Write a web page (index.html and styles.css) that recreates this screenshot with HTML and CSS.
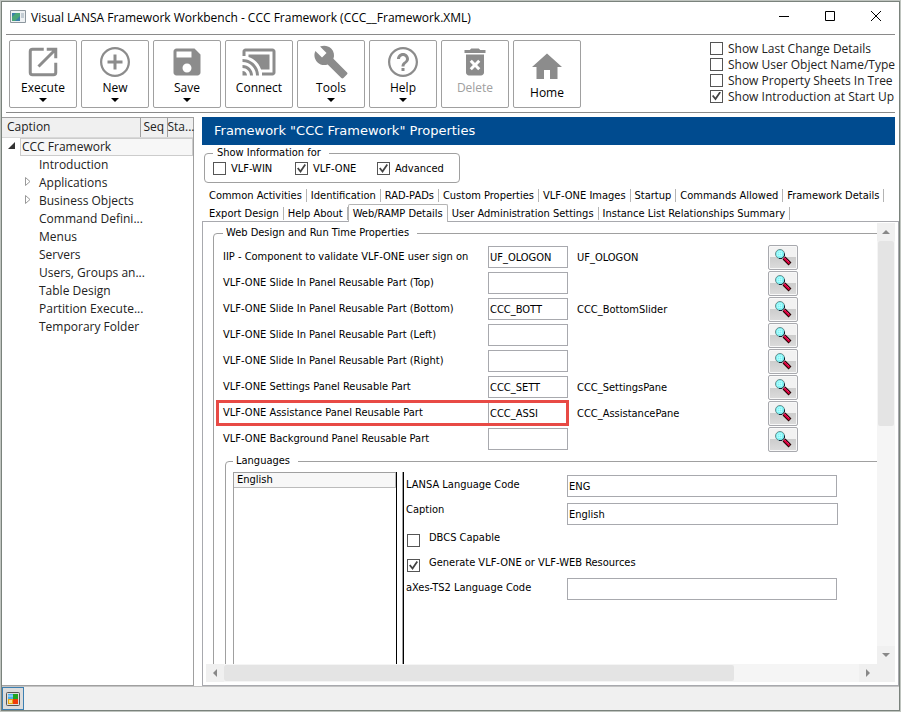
FILE: index.html
```html
<!DOCTYPE html>
<html lang="en">
<head>
  <meta charset="UTF-8" />
  <meta name="viewport" content="width=device-width, initial-scale=1.0"/>
  <title>Visual LANSA Framework Workbench</title>
  <link rel="stylesheet" href="styles.css">
</head>
<body>

<svg class="defs">
  <symbol id="search" viewBox="0 0 18 18">
    <path d="M10 10l6 6" stroke="#200" stroke-width="4"/>
    <path d="M10 10l5.500 5.500" stroke="#e0003c" stroke-width="2"/>
    <path d="M11.500 10.500l4 4" stroke="#f040a0" stroke-width="1" stroke-dasharray="1 1"/>
    <circle cx="6" cy="6" r="4.500" fill="#7ff4f6" stroke="#6d8c8c"/>
    <path d="M3 5h6M3 7h6M5 3v6M7 3v6" stroke="#c8ffff" stroke-dasharray="1 1"/>
    <path d="M10.500 5.500v2.500l-2.500 2.500h-3" fill="none" stroke="#123"/>
  </symbol>
</svg>

<div class="window">
  <header class="titlebar">
    <svg class="app-icon" width="16" height="14" viewBox="0 0 16 14">
      <path d="M.5.5h15v12H.5z" fill="#eef1f3" stroke="#8d979e"/>
      <path d="M2 3h8v8H2z" fill="#3a7fa8"/>
      <path d="M2 7l4-4h4v3L5 11H2z" fill="#4aa678"/>
      <path d="M11 3h3v5h-3z" fill="#c4cdd4"/>
    </svg>
    <h1>Visual LANSA Framework Workbench - CCC Framework (CCC__Framework.XML)</h1>
    <div class="window-buttons">
      <button aria-label="Minimize"><svg width="12" height="12"><path d="M1 6.500h10" stroke="#000"/></svg></button>
      <button aria-label="Maximize"><svg width="12" height="12"><path d="M1.500 1.500h9v9h-9z" fill="none" stroke="#000"/></svg></button>
      <button aria-label="Close"><svg width="12" height="12"><path d="M1 1l10 10M11 1L1 11" stroke="#000"/></svg></button>
    </div>
  </header>

  <div class="toolbar">
    <div class="tools">
      <button class="tool">
        <svg viewBox="0 0 24 24"><path d="M13 4H5.500Q4 4 4 5.500v14Q4 21 5.500 21h14q1.500 0 1.500-1.500V13M15 4H21v6M21 4L9.500 15.500" transform="translate(-.5 -.5)" fill="none" stroke="#8c8c8c" stroke-width="2"/></svg>
        <span>Execute</span><i class="arrow"></i>
      </button>
      <button class="tool">
        <svg viewBox="0 0 24 24"><path d="M13 7h-2v4H7v2h4v4h2v-4h4v-2h-4V7zm-1-5C6.480 2 2 6.480 2 12s4.480 10 10 10 10-4.480 10-10S17.520 2 12 2zm0 18.500c-4.700 0-8.500-3.800-8.500-8.500S7.300 3.500 12 3.500s8.500 3.800 8.500 8.500-3.800 8.500-8.500 8.500z"/></svg>
        <span>New</span><i class="arrow"></i>
      </button>
      <button class="tool">
        <svg viewBox="0 0 24 24"><path d="M17 3H5c-1.110 0-2 .9-2 2v14c0 1.100.89 2 2 2h14c1.100 0 2-.9 2-2V7l-4-4zm-5 16c-1.660 0-3-1.340-3-3s1.340-3 3-3 3 1.340 3 3-1.340 3-3 3zm3-10H5V5h10v4z"/></svg>
        <span>Save</span><i class="arrow"></i>
      </button>
      <button class="tool">
        <svg viewBox="0 0 24 24"><path d="M1 18v3h3c0-1.660-1.340-3-3-3zm0-4v2c2.760 0 5 2.240 5 5h2c0-3.870-3.130-7-7-7zm18-7H5v1.630c3.960 1.280 7.090 4.410 8.370 8.370H19V7zM1 10v2c4.970 0 9 4.030 9 9h2c0-6.080-4.930-11-11-11zm20-7H3c-1.100 0-2 .9-2 2v3h2V5h18v14h-7v2h7c1.100 0 2-.9 2-2V5c0-1.100-.9-2-2-2z"/></svg>
        <span>Connect</span>
      </button>
      <button class="tool">
        <svg viewBox="0 0 24 24"><path d="M22.700 19l-9.100-9.100c.9-2.300.4-5-1.500-6.900-2-2-5-2.400-7.400-1.300L9 6 6 9 1.600 4.700C.4 7.100.9 10.100 2.900 12.100c1.900 1.900 4.600 2.400 6.900 1.500l9.100 9.100c.4.4 1 .4 1.400 0l2.300-2.300c.5-.4.5-1.100.1-1.400z"/></svg>
        <span>Tools</span><i class="arrow"></i>
      </button>
      <button class="tool">
        <svg viewBox="0 0 24 24"><path d="M11 18h2v-2h-2v2zm1-16C6.480 2 2 6.480 2 12s4.480 10 10 10 10-4.480 10-10S17.520 2 12 2zm0 18.500c-4.700 0-8.500-3.800-8.500-8.500S7.300 3.500 12 3.500s8.500 3.800 8.500 8.500-3.800 8.500-8.500 8.500zM12 6c-2.210 0-4 1.790-4 4h2c0-1.100.9-2 2-2s2 .9 2 2c0 2-3 1.750-3 5h2c0-2.250 3-2.500 3-5 0-2.210-1.790-4-4-4z"/></svg>
        <span>Help</span><i class="arrow"></i>
      </button>
      <button class="tool" disabled>
        <svg viewBox="0 0 24 24"><path d="M6 19c0 1.100.9 2 2 2h8c1.100 0 2-.9 2-2V7H6v12zm2.460-7.120l1.410-1.410L12 12.590l2.120-2.120 1.410 1.410L13.410 14l2.120 2.120-1.410 1.410L12 15.410l-2.120 2.120-1.410-1.410L10.590 14l-2.130-2.120zM15.500 4l-1-1h-5l-1 1H5v2h14V4z"/></svg>
        <span>Delete</span>
      </button>
      <button class="tool home">
        <svg viewBox="0 0 24 24"><path d="M10 20v-6h4v6h5v-8h3L12 3 2 12h3v8z"/></svg>
        <span>Home</span>
      </button>
    </div>
    <div class="options">
      <label><input type="checkbox">Show Last Change Details</label>
      <label><input type="checkbox">Show User Object Name/Type</label>
      <label><input type="checkbox">Show Property Sheets In Tree</label>
      <label><input type="checkbox" checked>Show Introduction at Start Up</label>
    </div>
  </div>

  <div class="main">
    <aside class="tree">
      <table>
        <thead>
          <tr><th>Caption</th><th class="seq">Seq</th><th class="sta">Sta...</th></tr>
        </thead>
        <tbody>
          <tr><td colspan="3" class="root"><div><svg width="18" height="10"><path d="M13 1v7H6z" fill="#333"/></svg><span>CCC Framework</span></div></td></tr>
          <tr><td colspan="3">Introduction</td></tr>
          <tr><td colspan="3"><svg class="twisty" width="6" height="9"><path d="M.5.5l4.500 4-4.500 4z" fill="#fff" stroke="#999"/></svg>Applications</td></tr>
          <tr><td colspan="3"><svg class="twisty" width="6" height="9"><path d="M.5.5l4.500 4-4.500 4z" fill="#fff" stroke="#999"/></svg>Business Objects</td></tr>
          <tr><td colspan="3">Command Defini...</td></tr>
          <tr><td colspan="3">Menus</td></tr>
          <tr><td colspan="3">Servers</td></tr>
          <tr><td colspan="3">Users, Groups an...</td></tr>
          <tr><td colspan="3">Table Design</td></tr>
          <tr><td colspan="3">Partition Execute...</td></tr>
          <tr><td colspan="3">Temporary Folder</td></tr>
        </tbody>
      </table>
    </aside>

    <section class="properties">
      <h2>Framework "CCC Framework" Properties</h2>
      <fieldset class="show-info">
        <legend>Show Information for</legend>
        <label><input type="checkbox">VLF-WIN</label>
        <label><input type="checkbox" checked>VLF-ONE</label>
        <label><input type="checkbox" checked>Advanced</label>
      </fieldset>

      <nav class="tabs">
        <div class="tab-row">
          <button>Common Activities</button><button>Identification</button><button>RAD-PADs</button><button>Custom Properties</button><button>VLF-ONE Images</button><button>Startup</button><button>Commands Allowed</button><button>Framework Details</button>
        </div>
        <div class="tab-row">
          <button>Export Design</button><button>Help About</button><button class="active">Web/RAMP Details</button><button>User Administration Settings</button><button>Instance List Relationships Summary</button>
        </div>
      </nav>

      <div class="panel">
        <div class="view">
          <fieldset class="group">
            <legend>Web Design and Run Time Properties</legend>
            <div class="part">
              <label for="iip">IIP - Component to validate VLF-ONE user sign on</label>
              <input id="iip" value="UF_OLOGON"><span>UF_OLOGON</span>
              <button aria-label="Find"><svg><use href="#search"/></svg></button>
            </div>
            <div class="part">
              <label for="top">VLF-ONE Slide In Panel Reusable Part (Top)</label>
              <input id="top"><span></span>
              <button aria-label="Find"><svg><use href="#search"/></svg></button>
            </div>
            <div class="part">
              <label for="bottom">VLF-ONE Slide In Panel Reusable Part (Bottom)</label>
              <input id="bottom" value="CCC_BOTT"><span>CCC_BottomSlider</span>
              <button aria-label="Find"><svg><use href="#search"/></svg></button>
            </div>
            <div class="part">
              <label for="left">VLF-ONE Slide In Panel Reusable Part (Left)</label>
              <input id="left"><span></span>
              <button aria-label="Find"><svg><use href="#search"/></svg></button>
            </div>
            <div class="part">
              <label for="right">VLF-ONE Slide In Panel Reusable Part (Right)</label>
              <input id="right"><span></span>
              <button aria-label="Find"><svg><use href="#search"/></svg></button>
            </div>
            <div class="part">
              <label for="settings">VLF-ONE Settings Panel Reusable Part</label>
              <input id="settings" value="CCC_SETT"><span>CCC_SettingsPane</span>
              <button aria-label="Find"><svg><use href="#search"/></svg></button>
            </div>
            <div class="part marked">
              <label for="assist">VLF-ONE Assistance Panel Reusable Part</label>
              <input id="assist" value="CCC_ASSI"><span>CCC_AssistancePane</span>
              <button aria-label="Find"><svg><use href="#search"/></svg></button>
            </div>
            <div class="part">
              <label for="background">VLF-ONE Background Panel Reusable Part</label>
              <input id="background"><span></span>
              <button aria-label="Find"><svg><use href="#search"/></svg></button>
            </div>

            <fieldset class="group languages">
              <legend>Languages</legend>
              <ul class="language-list"><li>English</li></ul>
              <div class="splitter"></div>
              <div class="language-form">
                <label for="code">LANSA Language Code</label><input id="code" value="ENG">
                <label for="caption">Caption</label><input id="caption" class="wide" value="English">
                <label class="check"><input type="checkbox">DBCS Capable</label>
                <label class="check"><input type="checkbox" checked>Generate VLF-ONE or VLF-WEB Resources</label>
                <label for="axes">aXes-TS2 Language Code</label><input id="axes">
              </div>
            </fieldset>
          </fieldset>
        </div>
        <div class="scroll-v">
          <button aria-label="Scroll up"><svg width="8" height="4"><path d="M4 0l4 4H0z"/></svg></button>
          <div class="thumb"></div>
          <button aria-label="Scroll down"><svg width="8" height="4"><path d="M4 4L0 0h8z"/></svg></button>
        </div>
        <div class="scroll-h">
          <button aria-label="Scroll left"><svg width="4" height="8"><path d="M0 4l4-4v8z"/></svg></button>
          <div class="thumb"></div>
          <button aria-label="Scroll right"><svg width="4" height="8"><path d="M4 4L0 0v8z"/></svg></button>
        </div>
        <div class="corner"></div>
      </div>
    </section>
  </div>

  <footer class="statusbar">
    <button aria-label="Framework">
      <svg width="14" height="14" viewBox="0 0 14 14">
        <rect x=".5" y=".5" width="13" height="13" rx="1" fill="#ddd" stroke="#555"/>
        <path d="M2 2h5v5H2z" fill="#4db0ee"/><path d="M7 2h5v5H7z" fill="#1fa31f"/>
        <path d="M2 7h5v5H2z" fill="#e8a810"/><path d="M7 7h5v5H7z" fill="#f03a08"/>
        <path d="M3 8h3v3H3z" fill="#fbe08a"/><path d="M2 4h5" stroke="#bfe4fb"/>
      </svg>
    </button>
  </footer>
</div>

</body>
</html>
```
FILE: styles.css
```css
* {
  box-sizing: border-box;
}
body {
  margin: 0;
  background: #bfc4bf;
  font-family: "Open Sans", "Noto Sans", sans-serif;
  font-size: 12px;
  color: #000;
}
button {
  margin: 0;
  padding: 0;
  border: none;
  background: none;
  font: inherit;
  color: inherit;
}
.defs {
  display: none;
}
.window {
  display: flex;
  flex-direction: column;
  height: calc(100vh - 2px);
  margin: 1px;
  border: 1px solid #7a827c;
  background: #fff;
  overflow: hidden;
}

/* title bar */
.titlebar {
  display: flex;
  align-items: center;
  height: 33px;
  flex: none;
  margin: 0 4px;
  padding: 0 4px;
  border-bottom: 1px solid #8a8a8a;
}
.titlebar h1 {
  flex: 1;
  margin: 0 0 2px 5px;
  font-size: 12px;
  font-weight: normal;
  white-space: nowrap;
}
.window-buttons {
  display: flex;
  padding: 0 9px 4px 0;
  gap: 34px;
}
.app-icon {
  margin-bottom: 3px;
}
.window-buttons svg {
  display: block;
}

/* toolbar */
.toolbar {
  display: flex;
  justify-content: space-between;
  flex: none;
  height: 78px;
  margin: 0 4px;
  padding: 5px 0 4px 3px;
  border-bottom: 1px solid #8a8a8a;
}
.tools {
  display: flex;
  gap: 4px;
}
.tool {
  display: flex;
  flex-direction: column;
  align-items: center;
  width: 68px;
  height: 68px;
  padding-top: 3px;
  border: 1px solid #a0a0a0;
  border-radius: 2px;
}
.tool svg {
  width: 36px;
  height: 36px;
  flex: none;
  fill: #8c8c8c;
}
.tool span {
  line-height: 16px;
}
.tool:disabled span {
  color: #a0a0a0;
}
.home {
  padding-top: 8px;
}
.arrow {
  margin-top: 2px;
  border: 4px solid transparent;
  border-top-color: #000;
  border-bottom: none;
}
.options {
  display: flex;
  flex-direction: column;
}
.options label {
  display: flex;
  align-items: center;
  gap: 5px;
  height: 16px;
  color: #222;
}
input[type="checkbox"] {
  appearance: none;
  display: grid;
  place-items: center;
  flex: none;
  width: 13px;
  height: 13px;
  margin: 0;
  border: 1px solid #555;
  background: #fff;
}
input[type="checkbox"]:checked::after {
  content: "";
  width: 9px;
  height: 9px;
  background: #444;
  clip-path: polygon(0 50%, 16% 38%, 38% 66%, 84% 0, 100% 10%, 40% 100%);
}

/* object tree */
.main {
  display: flex;
  flex: 1;
  min-height: 0;
  gap: 8px;
  padding-top: 4px;
}
.tree {
  width: 192px;
  flex: none;
  border: solid #a0a0a0;
  border-width: 1px 1px 1px 0;
}
.tree table {
  width: 100%;
  table-layout: fixed;
  border-collapse: collapse;
  color: #222;
}
.tree th {
  height: 19px;
  padding: 0 0 0 5px;
  border-bottom: 1px solid #d8d8d8;
  background: #f0f0f0;
  font-weight: normal;
  line-height: 16px;
  text-align: left;
  white-space: nowrap;
}
.tree .seq {
  width: 27px;
  padding-left: 3px;
  border-left: 1px solid #a0a0a0;
}
.tree .sta {
  width: 26px;
  padding-left: 0;
  border-left: 1px solid #a0a0a0;
}
.tree td {
  height: 18px;
  padding: 0 0 0 37px;
  line-height: 18px;
}
.tree .root {
  padding: 0;
}
.root div {
  display: flex;
}
.root svg {
  margin-top: 3px;
}
.root span {
  flex: 1;
  padding-left: 1px;
  border: 1px solid #ccc;
  background: #f7f7f7;
  line-height: 16px;
}
.twisty {
  margin: 0 8px 1px -14px;
}

/* property sheet */
.properties {
  display: flex;
  flex-direction: column;
  flex: 1;
  min-width: 0;
  font-family: "DejaVu Sans Condensed", Tahoma, sans-serif;
  font-size: 11px;
}
.properties h2 {
  flex: none;
  margin: 0 4px 0 0;
  padding-left: 12px;
  background: #004b8f;
  color: #fff;
  font: 13px/28px "DejaVu Sans", Verdana, sans-serif;
}
.properties input {
  font: inherit;
}
fieldset {
  margin: 0;
  border: 1px solid #a0a0a0;
  border-radius: 4px;
}
legend {
  line-height: 14px;
}
.show-info {
  display: flex;
  align-self: flex-start;
  width: 256px;
  height: 37px;
  margin: 1px 0 0 2px;
  padding: 2px 0 0 8px;
}
.show-info legend {
  padding: 0 8px 0 4px;
}
.show-info label {
  display: flex;
  flex: none;
  width: 82px;
  height: 13px;
  align-items: center;
  gap: 5px;
}
.tabs {
  flex: none;
  margin-bottom: -1px;
  padding-top: 3px;
}
.tab-row {
  display: flex;
  align-items: center;
  height: 18px;
  padding-left: 3px;
}
.tab-row button {
  height: 13px;
  padding: 0 4px;
  border-right: 1px solid #b4b4b4;
  line-height: 13px;
  white-space: nowrap;
}
.tab-row .active {
  position: relative;
  z-index: 1;
  height: 18px;
  border: 1px solid #b4b4b4;
  border-bottom: none;
  border-radius: 2px 2px 0 0;
  background: #fff;
  line-height: 17px;
}

.panel {
  display: grid;
  grid-template-columns: minmax(0, 1fr) 18px;
  grid-template-rows: minmax(0, 1fr) 18px;
  flex: 1;
  min-height: 0;
  padding: 1px 3px 3px;
  border: 1px solid #a8a9ae;
}
.view {
  overflow: hidden;
  padding: 3px 0 0 7px;
}
.group {
  width: 760px;
  height: 560px;
  padding: 4px 0 0 9px;
}
.group legend {
  padding: 0 8px 0 3px;
}
.part {
  position: relative;
  display: grid;
  grid-template-columns: 265px 80px 200px 30px;
  align-items: center;
  height: 26px;
}
.part label {
  padding-bottom: 2px;
}
.part input,
.language-form > input {
  height: 22px;
  padding: 0 1px;
  border: 1px solid #a8a9ae;
  border-radius: 0;
}
.part span {
  padding-left: 9px;
}
.part button {
  height: 25px;
  border: 1px solid #a8a9ae;
  border-radius: 2px;
  background: linear-gradient(#f2f2f2 50%, #cdcdcd 50%, #dcdcdc);
  box-shadow: inset 0 0 0 1px #f8f8f8;
}
.part svg {
  display: block;
  width: 18px;
  height: 18px;
  margin: 0 auto;
}
.marked::after {
  content: "";
  box-sizing: border-box;
  position: absolute;
  top: 0;
  left: -7px;
  width: 353px;
  height: 26px;
  border: 3px solid #e84a45;
}
.languages {
  display: flex;
  height: 320px;
  margin: 2px 0 0 2px;
  padding: 4px 0 0 7px;
}
.language-list {
  width: 163px;
  margin: 0;
  padding: 0;
  border: 1px solid #a0a0a0;
  border-right: none;
  list-style: none;
}
.language-list li {
  padding-left: 3px;
  border: 1px solid #bbb;
  border-width: 0 1px 1px 0;
  background: #f7f7f7;
  line-height: 14px;
}
.splitter {
  width: 8px;
  border: solid #000;
  border-width: 0 1px;
  box-shadow: inset -1px 0 #a0a0a0;
}
.language-form {
  display: grid;
  grid-template-columns: 161px 271px;
  grid-template-rows: 25px 28px 25px 25px 25px;
  align-items: start;
  padding: 3px 0 0 2px;
  line-height: 20px;
}
.language-form > input {
  width: 270px;
}
.language-form > .wide {
  align-self: center;
  width: 271px;
}
.check {
  display: flex;
  grid-column: 1 / 3;
  gap: 9px;
}
.check input {
  margin: 6px 0 0 1px;
}

/* scroll bars */
.scroll-v,
.scroll-h {
  display: flex;
  background: #f5f5f5;
}
.scroll-v {
  flex-direction: column;
}
.scroll-v button,
.scroll-h button {
  display: grid;
  place-items: center;
  flex: none;
  width: 18px;
  height: 18px;
  background: #f0f0f0;
  fill: #888;
}
.thumb {
  border-radius: 2px;
  background: #e4e4e4;
}
.scroll-v .thumb {
  height: 42%;
  margin: 0 1px;
}
.scroll-h .thumb {
  width: 76%;
  margin: 1px 0;
}
.scroll-v button:last-child {
  margin-top: auto;
}
.scroll-h button:last-child {
  margin-left: auto;
}
.corner {
  background: #f0f0f0;
}

.statusbar {
  flex: none;
  height: 24px;
  border-top: 1px solid #c4c4c4;
  background: #f0f0f0;
}
.statusbar button {
  display: grid;
  place-items: center;
  width: 22px;
  height: 23px;
  border: 1px solid #3c7fb1;
  background: #dcdcdc;
}
```
